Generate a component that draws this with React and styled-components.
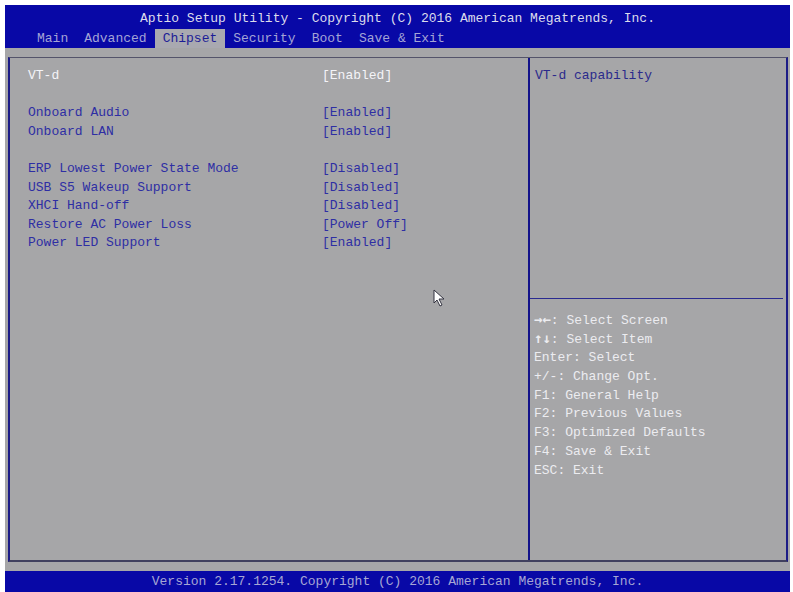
import React from 'react';
import styled, { createGlobalStyle } from 'styled-components';

const GlobalStyle = createGlobalStyle`
html, body {
  margin: 0;
  padding: 0;
  background: #ffffff;
}
* { box-sizing: border-box; }
`;

const Screen = styled.div`
position: relative;
width: 793px;
height: 592px;
padding: 5px 3px 0 5px;
display: flex;
flex-direction: column;
font-family: "Liberation Mono", "DejaVu Sans Mono", monospace;
font-size: 13px;
overflow: hidden;
`;

const Header = styled.div`
background: #0808a6;
height: 43px;
display: flex;
flex-direction: column;
`;

const Title = styled.div`
height: 24px;
padding-top: 4px;
line-height: 20px;
text-align: center;
color: #dcdcec;
white-space: pre;
`;

const Tabs = styled.div`
height: 19px;
display: flex;
padding-left: 24px;
`;

const Tab = styled.div`
padding: 0 8px;
line-height: 19px;
white-space: pre;
color: ${p => (p.active ? '#1c1c96' : '#a4a4d6')};
background: ${p => (p.active ? '#a9a9b0' : 'transparent')};
`;

const Body = styled.div`
flex: 1;
background: #a6a6a8;
padding: 9px 2px 9px 3px;
display: flex;
`;

const Frame = styled.div`
flex: 1;
display: grid;
grid-template-columns: 518px 2px 1fr;
border-left: 2px solid #1c1c86;
border-right: 2px solid #1c1c86;
border-top: 1px solid #54546a;
border-bottom: 2px solid #40405e;
`;

const Divider = styled.div`
background: #12128a;
`;

const Settings = styled.div`
padding: 9px 0 0 18px;
line-height: 18.6px;
`;

const Row = styled.div`
display: grid;
grid-template-columns: 294px 1fr;
height: 18.6px;
white-space: pre;
color: ${p => (p.selected ? '#f4f4f8' : '#2e2ea4')};
`;

const Gap = styled.div`
height: 18.6px;
`;

const Help = styled.div`
display: flex;
flex-direction: column;
`;

const HelpTop = styled.div`
height: 241px;
margin-right: 3px;
padding: 9px 0 0 5px;
line-height: 18.6px;
color: #2a2a8c;
border-bottom: 1px solid #2a2a90;
`;

const Keys = styled.div`
padding: 13px 0 0 4px;
color: #ececf0;
`;

const KeyLine = styled.div`
height: 18.7px;
line-height: 18.7px;
white-space: pre;
`;

const Glyph = styled.span`
font-family: "DejaVu Sans Mono", monospace;
font-weight: bold;
font-size: 14px;
line-height: 0;
`;

const Footer = styled.div`
height: 21px;
background: #0808a6;
color: #a6a6d4;
text-align: center;
line-height: 21px;
white-space: pre;
`;

const Cursor = styled.svg`
position: absolute;
left: 433px;
top: 289px;
`;

const rows = [
  { label: 'VT-d', value: '[Enabled]', selected: true },
  null,
  { label: 'Onboard Audio', value: '[Enabled]' },
  { label: 'Onboard LAN', value: '[Enabled]' },
  null,
  { label: 'ERP Lowest Power State Mode', value: '[Disabled]' },
  { label: 'USB S5 Wakeup Support', value: '[Disabled]' },
  { label: 'XHCI Hand-off', value: '[Disabled]' },
  { label: 'Restore AC Power Loss', value: '[Power Off]' },
  { label: 'Power LED Support', value: '[Enabled]' },
];

const tabs = ['Main', 'Advanced', 'Chipset', 'Security', 'Boot', 'Save & Exit'];

export default function App() {
  return (
    <>
      <GlobalStyle />
      <Screen>
        <Header>
          <Title>Aptio Setup Utility - Copyright (C) 2016 American Megatrends, Inc.</Title>
          <Tabs>
            {tabs.map(t => (
              <Tab key={t} active={t === 'Chipset'}>{t}</Tab>
            ))}
          </Tabs>
        </Header>
        <Body>
          <Frame>
            <Settings>
              {rows.map((r, i) =>
                r ? (
                  <Row key={i} selected={r.selected}>
                    <span>{r.label}</span>
                    <span>{r.value}</span>
                  </Row>
                ) : (
                  <Gap key={i} />
                )
              )}
            </Settings>
            <Divider />
            <Help>
              <HelpTop>VT-d capability</HelpTop>
              <Keys>
                <KeyLine><Glyph>→←</Glyph>: Select Screen</KeyLine>
                <KeyLine><Glyph>↑↓</Glyph>: Select Item</KeyLine>
                <KeyLine>Enter: Select</KeyLine>
                <KeyLine>+/-: Change Opt.</KeyLine>
                <KeyLine>F1: General Help</KeyLine>
                <KeyLine>F2: Previous Values</KeyLine>
                <KeyLine>F3: Optimized Defaults</KeyLine>
                <KeyLine>F4: Save &amp; Exit</KeyLine>
                <KeyLine>ESC: Exit</KeyLine>
              </Keys>
            </Help>
          </Frame>
        </Body>
        <Footer>Version 2.17.1254. Copyright (C) 2016 American Megatrends, Inc.</Footer>
        <Cursor width="14" height="18" viewBox="0 0 14 18">
          <path d="M1 1 L1 14 L4 11 L7 17 L9 16 L6 10 L11 10 Z" fill="#ffffff" stroke="#333340" strokeWidth="1" />
        </Cursor>
      </Screen>
    </>
  );
}
